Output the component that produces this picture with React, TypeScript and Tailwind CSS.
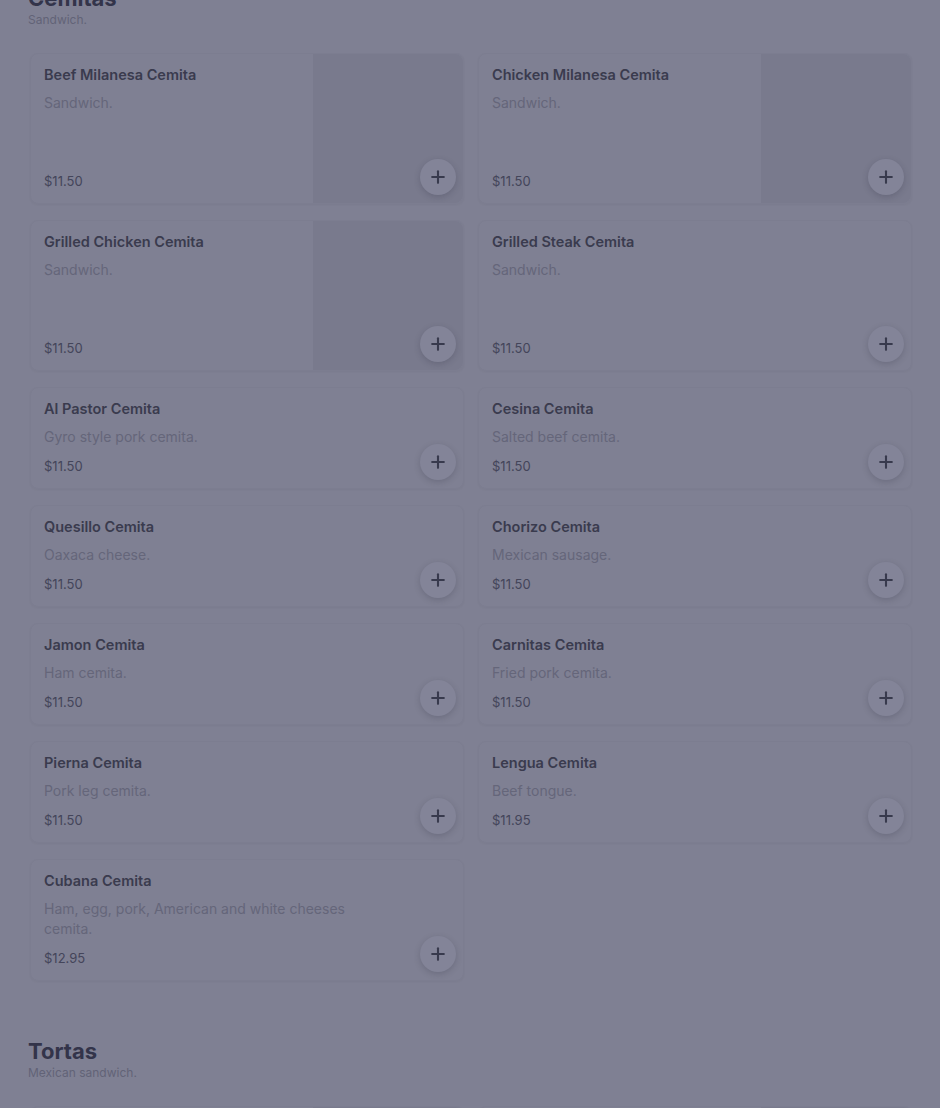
import { Plus } from "lucide-react";

type Item = {
  name: string;
  desc: string;
  price: string;
  image?: boolean;
};

const CEMITAS: Item[] = [
  { name: "Beef Milanesa Cemita", desc: "Sandwich.", price: "$11.50", image: true },
  { name: "Chicken Milanesa Cemita", desc: "Sandwich.", price: "$11.50", image: true },
  { name: "Grilled Chicken Cemita", desc: "Sandwich.", price: "$11.50", image: true },
  { name: "Grilled Steak Cemita", desc: "Sandwich.", price: "$11.50" },
  { name: "Al Pastor Cemita", desc: "Gyro style pork cemita.", price: "$11.50" },
  { name: "Cesina Cemita", desc: "Salted beef cemita.", price: "$11.50" },
  { name: "Quesillo Cemita", desc: "Oaxaca cheese.", price: "$11.50" },
  { name: "Chorizo Cemita", desc: "Mexican sausage.", price: "$11.50" },
  { name: "Jamon Cemita", desc: "Ham cemita.", price: "$11.50" },
  { name: "Carnitas Cemita", desc: "Fried pork cemita.", price: "$11.50" },
  { name: "Pierna Cemita", desc: "Pork leg cemita.", price: "$11.50" },
  { name: "Lengua Cemita", desc: "Beef tongue.", price: "$11.95" },
  { name: "Cubana Cemita", desc: "Ham, egg, pork, American and white cheeses cemita.", price: "$12.95" },
];

const TORTAS: Item[] = [
  { name: "Milanesa Torta", desc: "Mexican sandwich.", price: "$11.50", image: true },
  { name: "Chicken Torta", desc: "Mexican sandwich.", price: "$11.50", image: true },
];

function ItemCard({ item }: { item: Item }) {
  return (
    <div className="relative flex rounded-lg border border-[#7c7d90] shadow-[0_1px_2px_rgba(40,40,60,0.05)]">
      <div className="flex min-w-0 flex-1 flex-col pt-[11px] pr-[13px] pb-[12px] pl-[13px]">
        <div className="text-[14.5px] leading-[20px] font-semibold text-[#3a3b4e]">{item.name}</div>
        <div className="mt-[8px] max-w-[320px] text-[14px] leading-[20px] text-[#65667a]">{item.desc}</div>
        <div className="mt-auto pt-[9px] text-[13px] leading-[20px] text-[#44455a]">{item.price}</div>
      </div>
      {item.image && <div className="h-[149px] w-[150px] shrink-0 rounded-r-lg bg-[#797a8d]" />}
      <button className="absolute right-[7px] bottom-[8px] flex h-[36px] w-[36px] items-center justify-center rounded-full bg-[#838498] text-[#383a4d] shadow-[0_2px_6px_rgba(40,40,60,0.22)]">
        <Plus className="h-[20px] w-[20px]" strokeWidth={2.5} />
      </button>
    </div>
  );
}

function Section({ title, subtitle, items, first }: { title: string; subtitle: string; items: Item[]; first?: boolean }) {
  return (
    <section className={first ? "-mt-[16px]" : "mt-[56px]"}>
      <h2 className="text-[22px] leading-[28px] font-bold text-[#33344a]">{title}</h2>
      <p className="text-[12px] leading-[16px] text-[#626377]">{subtitle}</p>
      <div className="mt-[25px] ml-[2px] grid grid-cols-2 gap-x-[14px] gap-y-[16px]">
        {items.map((it) => (
          <ItemCard key={it.name} item={it} />
        ))}
      </div>
    </section>
  );
}

export default function App() {
  return (
    <div
      className="h-[1108px] overflow-hidden bg-[#7f8093] px-[28px]"
      style={{ fontFamily: "Inter, 'Noto Sans', sans-serif" }}
    >
      <Section first title="Cemitas" subtitle="Sandwich." items={CEMITAS} />
      <Section title="Tortas" subtitle="Mexican sandwich." items={TORTAS} />
    </div>
  );
}
